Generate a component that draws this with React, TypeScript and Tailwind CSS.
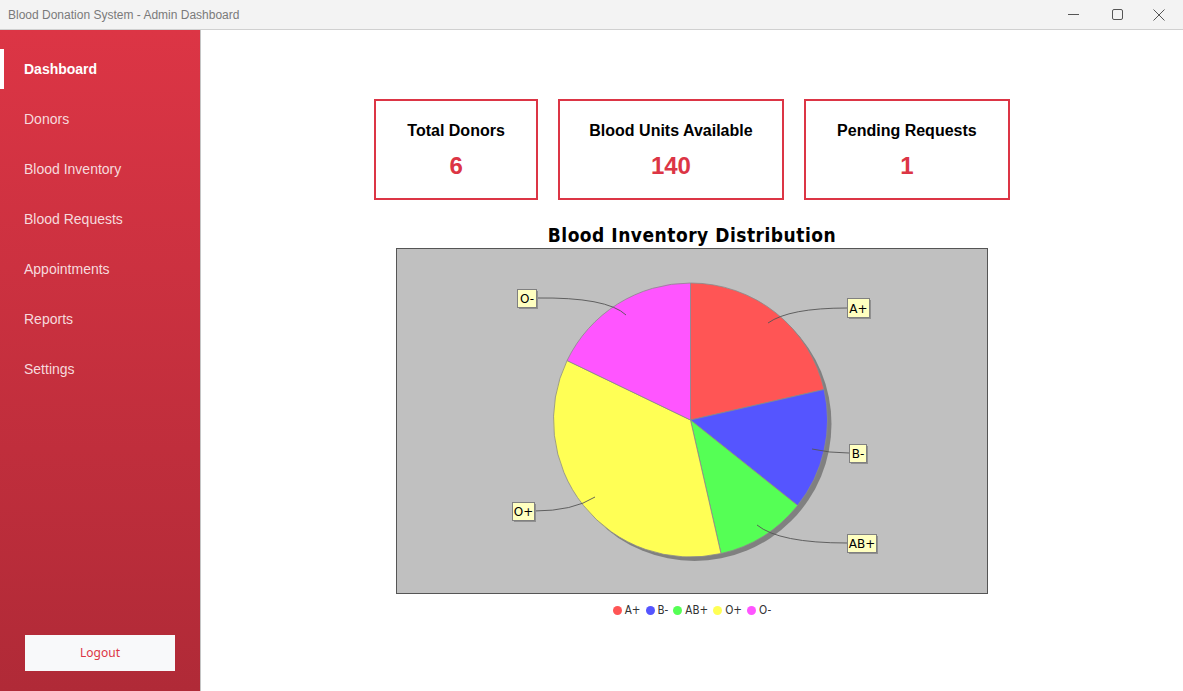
import React from 'react';

const navItems = ['Dashboard', 'Donors', 'Blood Inventory', 'Blood Requests', 'Appointments', 'Reports', 'Settings'];

const stats = [
  { label: 'Total Donors', value: '6' },
  { label: 'Blood Units Available', value: '140' },
  { label: 'Pending Requests', value: '1' },
];

const slices = [
  { name: 'A+', value: 30, color: '#ff5555' },
  { name: 'B-', value: 20, color: '#5555ff' },
  { name: 'AB+', value: 15, color: '#55ff55' },
  { name: 'O+', value: 50, color: '#ffff55' },
  { name: 'O-', value: 25, color: '#ff55ff' },
];

// label boxes and link curves, in plot coordinates
const labels = [
  { name: 'A+', x: 450, y: 49, w: 22, h: 19, link: 'M371 74 Q392 59 450 59' },
  { name: 'B-', x: 452, y: 195, w: 17, h: 18, link: 'M415 200 Q432 204 452 204' },
  { name: 'AB+', x: 450, y: 285, w: 29, h: 18, link: 'M360 276 Q382 294 450 294' },
  { name: 'O+', x: 115, y: 253, w: 22, h: 18, link: 'M198 248 Q176 262 137 262' },
  { name: 'O-', x: 120, y: 40, w: 19, h: 18, link: 'M229 66 Q210 48 139 49' },
];

const CX = 293.5;
const CY = 171;
const R = 137;

const point = (deg: number) => {
  const a = (deg * Math.PI) / 180;
  return [CX + R * Math.sin(a), CY - R * Math.cos(a)];
};

const PieChart = () => {
  const total = slices.reduce((s, d) => s + d.value, 0);
  let start = 0;
  const paths = slices.map((d) => {
    const sweep = (d.value / total) * 360;
    const [x1, y1] = point(start);
    const [x2, y2] = point(start + sweep);
    const large = sweep > 180 ? 1 : 0;
    const p = `M${CX} ${CY} L${x1} ${y1} A${R} ${R} 0 ${large} 1 ${x2} ${y2} Z`;
    start += sweep;
    return { ...d, p };
  });

  return (
    <svg width="590" height="344" viewBox="0 0 590 344">
      <circle cx={CX + 4} cy={CY + 4} r={R} fill="#808080" />
      {paths.map((s) => (
        <path key={s.name} d={s.p} fill={s.color} stroke="#8a8a8a" strokeWidth="0.8" />
      ))}
      {labels.map((l) => (
        <g key={l.name}>
          <path d={l.link} fill="none" stroke="#555" strokeWidth="0.9" />
          <rect x={l.x + 2} y={l.y + 2} width={l.w} height={l.h} fill="#909090" />
          <rect x={l.x + 0.5} y={l.y + 0.5} width={l.w} height={l.h} fill="#ffffc0" stroke="#808080" />
          <text
            x={l.x + l.w / 2 + 0.5}
            y={l.y + l.h / 2 + 5}
            textAnchor="middle"
            fontSize="12"
            fontFamily="'DejaVu Sans', sans-serif"
            fill="#000"
          >
            {l.name}
          </text>
        </g>
      ))}
    </svg>
  );
};

const App = () => {
  return (
    <div className="w-[1183px] h-[691px] flex flex-col bg-white overflow-hidden font-['Liberation_Sans',Arial,sans-serif]">
      {/* window title bar */}
      <div className="h-[30px] shrink-0 flex items-center justify-between bg-[#f3f3f3] border-b border-[#d0d0d0]">
        <span className="pl-2 text-[12px] text-[#7a7a7a]">
          Blood Donation System - Admin Dashboard
        </span>
        <div className="flex items-center h-full text-[#555]">
          <div className="w-[44px] flex justify-center">
            <svg width="11" height="11" viewBox="0 0 11 11"><path d="M0 5.5h11" stroke="currentColor" strokeWidth="1" /></svg>
          </div>
          <div className="w-[44px] flex justify-center">
            <svg width="11" height="11" viewBox="0 0 11 11"><rect x="0.5" y="0.5" width="10" height="10" rx="1.5" fill="none" stroke="currentColor" strokeWidth="1" /></svg>
          </div>
          <div className="w-[44px] flex justify-center pr-1">
            <svg width="12" height="12" viewBox="0 0 12 12"><path d="M0.5 0.5l11 11M11.5 0.5l-11 11" stroke="currentColor" strokeWidth="1" /></svg>
          </div>
        </div>
      </div>

      <div className="flex flex-1 min-h-0">
        {/* sidebar */}
        <div className="w-[200px] shrink-0 flex flex-col justify-between bg-gradient-to-b from-[#dc3545] to-[#b02a37] border-r border-[#c4c4c4] box-content">
          <div className="flex flex-col gap-[10px] pt-[19px]">
            {navItems.map((item, i) => (
              <div key={item} className="h-10 flex items-center relative">
                {i === 0 && <div className="absolute left-0 top-0 h-full w-[4px] bg-white" />}
                <span
                  className={`pl-6 text-[14px] ${
                    i === 0 ? 'font-bold text-white' : 'text-[#f6dadd]'
                  }`}
                >
                  {item}
                </span>
              </div>
            ))}
          </div>
          <div className="px-[25px] pb-[20px]">
            <button className="w-[150px] h-[36px] bg-[#f8f9fa] text-[#dc3545] text-[12px] font-['Noto_Sans',sans-serif]">
              Logout
            </button>
          </div>
        </div>

        {/* main content */}
        <div className="flex-1 flex flex-col items-center pt-[69px]">
          <div className="flex gap-5">
            {stats.map((s, i) => (
              <div
                key={s.label}
                className={`h-[101px] border-2 border-[#dc3545] flex flex-col items-center pt-[20px] ${
                  i === 1 ? 'px-[29.5px]' : 'px-[31px]'
                }`}
              >
                <span className="text-[16px] font-bold text-black leading-5">{s.label}</span>
                <span className="mt-[13px] text-[24px] font-bold text-[#dc3545] leading-6">{s.value}</span>
              </div>
            ))}
          </div>

          <div className="mt-[23px] flex flex-col items-center">
            <div className="text-[19px] font-bold text-black leading-6 font-['DejaVu_Sans_Condensed','DejaVu_Sans',sans-serif] tracking-[0.5px]">
              Blood Inventory Distribution
            </div>
            <div className="mt-[1px] w-[592px] h-[346px] border border-[#555] bg-[#c0c0c0]">
              <PieChart />
            </div>
            <div className="mt-[8px] flex items-center gap-[5px] text-[11.5px] text-[#333] font-['DejaVu_Sans_Condensed','DejaVu_Sans',sans-serif]">
              {slices.map((s) => (
                <div key={s.name} className="flex items-center gap-[3px]">
                  <span className="w-[9px] h-[9px] rounded-full" style={{ backgroundColor: s.color }} />
                  <span>{s.name}</span>
                </div>
              ))}
            </div>
          </div>
        </div>
      </div>
    </div>
  );
};

export default App;
